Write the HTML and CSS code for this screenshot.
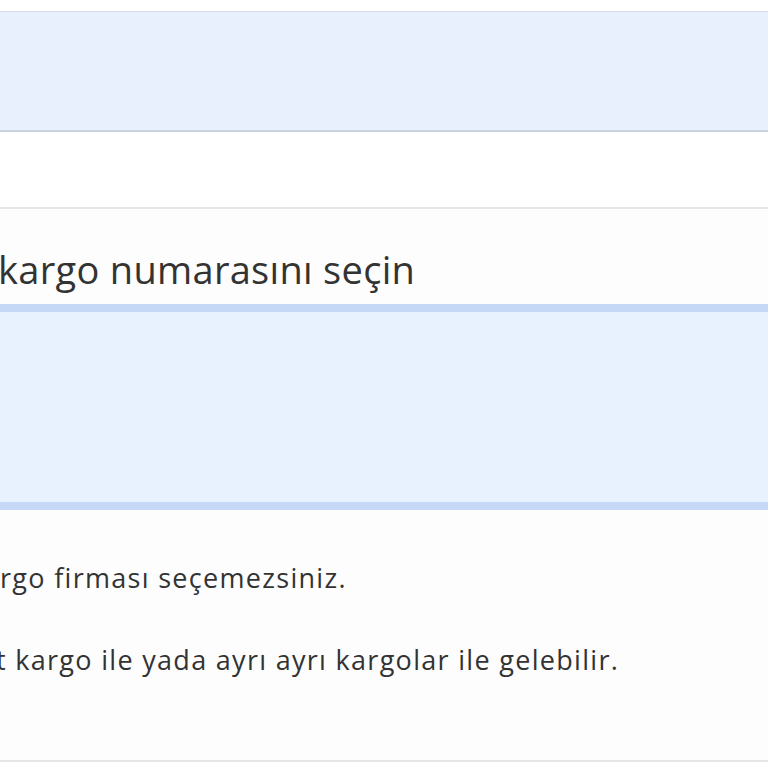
FILE: index.html
```html
<!DOCTYPE html>
<html lang="tr">
<head>
  <meta charset="UTF-8" />
  <meta name="viewport" content="width=device-width, initial-scale=1" />
  <title>Kargo seçimi</title>
  <link rel="stylesheet" href="styles.css">
</head>
<body>

  <div class="panel">
    <div class="bar-top"></div>
    <div class="spacer"></div>

    <div class="section">
      <h2 class="title">kargo numarasını seçin</h2>
      <div class="select-box"></div>

      <div class="notes">
        <p>rgo firması seçemezsiniz.</p>
        <p class="cut">t kargo ile yada ayrı ayrı kargolar ile gelebilir.</p>
      </div>
    </div>
  </div>

</body>
</html>
```

FILE: styles.css
```css
body {
  font-family: "Open Sans", "Noto Sans", sans-serif;
  margin: 0;
  background: #fff;
  color: #333;
  overflow: hidden;
}

.panel {
  padding-top: 11px;
}

/* Franja azul superior */
.bar-top {
  height: 118px;
  background: #e8f0fd;
  border-top: 1px solid #d6dde6;
  border-bottom: 2px solid #cbd3dd;
}

.spacer {
  height: 75px;
}

.section {
  border-top: 2px solid #e6e6e6;
  border-bottom: 2px solid #e6e6e6;
  background: #fdfdfd;
  height: 551px;
}

.title {
  font-size: 38px;
  font-weight: 400;
  letter-spacing: 0.3px;
  margin: 0;
  padding: 40px 0 0 0;
  height: 55px;
  line-height: 40px;
  margin-left: -2px;
}

/* Caja de selección */
.select-box {
  height: 190px;
  background: #e8f1fe;
  border-top: 8px solid #c5d8f5;
  border-bottom: 8px solid #c5d8f5;
}

.notes {
  padding-top: 51px;
}

.notes p {
  font-size: 27px;
  letter-spacing: 1.3px;
  margin: 0 0 48px;
  line-height: 34px;
}

.notes .cut {
  text-indent: -4px;
}
```
